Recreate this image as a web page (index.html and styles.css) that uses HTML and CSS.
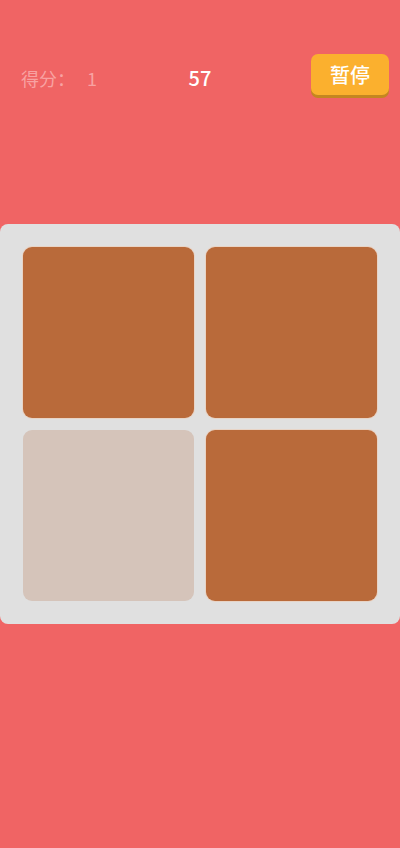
FILE: index.html
```html
<!DOCTYPE html>
<html>
<head>
<meta charset="utf-8">
<link rel="stylesheet" href="styles.css">
</head>
<body>
<div class="page">
  <div class="header">
    <div class="score"><span class="label">得分：</span><span class="value">1</span></div>
    <div class="time">57</div>
    <div class="right"><div class="pause">暂停</div></div>
  </div>
  <div class="board">
    <div class="tile"></div>
    <div class="tile"></div>
    <div class="tile light"></div>
    <div class="tile"></div>
  </div>
</div>
</body>
</html>
```
FILE: styles.css
```css
html, body {
  margin: 0;
  padding: 0;
}
body {
  background: #f06464;
  font-family: "Noto Sans CJK SC", "Noto Sans", sans-serif;
}
.page {
  width: 400px;
  height: 848px;
  display: flex;
  flex-direction: column;
}
.header {
  height: 98px;
  padding: 54px 11px 0 11px;
  box-sizing: border-box;
  display: grid;
  grid-template-columns: 1fr auto 1fr;
  align-items: start;
}
.score {
  margin-top: 10px;
  margin-left: 10px;
  font-size: 18px;
  line-height: 28px;
  color: #f8a2a2;
  display: flex;
}
.score .value {
  margin-left: 12px;
}
.time {
  margin-top: 9px;
  font-size: 20px;
  line-height: 30px;
  font-weight: 500;
  color: #ffffff;
  text-align: center;
}
.right {
  display: flex;
  justify-content: flex-end;
}
.pause {
  width: 78px;
  height: 41px;
  border-radius: 7px;
  background: #fbb02e;
  box-shadow: 0 3px 0 #c48620;
  color: #ffffff;
  font-size: 20px;
  font-weight: 500;
  line-height: 41px;
  text-align: center;
}
.board {
  margin-top: 126px;
  width: 400px;
  height: 400px;
  box-sizing: border-box;
  padding: 23px;
  background: #e0e0e0;
  border-radius: 8px;
  display: grid;
  grid-template-columns: 171px 171px;
  grid-template-rows: 171px 171px;
  gap: 12px;
}
.tile {
  background: #b96a3a;
  border-radius: 9px;
  box-shadow: 0 0 0 1px #e8d4c6;
}
.tile.light {
  background: #d5c4ba;
  box-shadow: none;
}
```
